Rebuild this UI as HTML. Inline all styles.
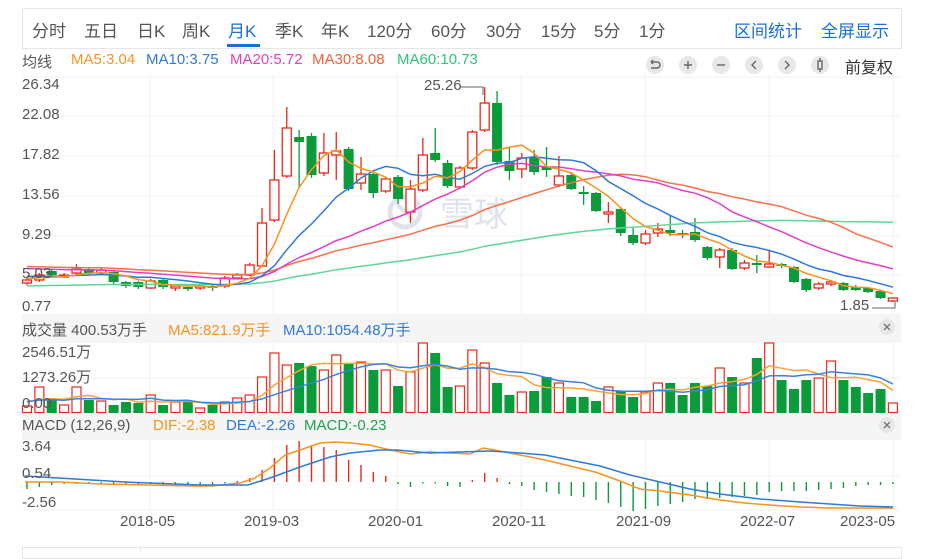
<!DOCTYPE html>
<html><head><meta charset="utf-8">
<style>
html,body{margin:0;padding:0;background:#fff;}
body{width:944px;height:551px;overflow:hidden;position:relative;font-family:"Liberation Sans","Noto Sans CJK SC",sans-serif;}
.t{position:absolute;white-space:nowrap;}
#bar{position:absolute;left:22px;top:8px;width:878px;height:39px;border:1px solid #e6e6e6;}
.tab{position:absolute;top:17px;font-size:17px;color:#555;}
.blue{color:#1a6fd1;}
.leg{position:absolute;top:51px;font-size:15px;}
.ax{position:absolute;font-size:15px;color:#555;}
</style></head><body>
<div id="bar"></div>
<div class="tab" style="left:32px">分时</div>
<div class="tab" style="left:84px">五日</div>
<div class="tab" style="left:137px">日K</div>
<div class="tab" style="left:182px">周K</div>
<div class="tab blue" style="left:228px">月K</div>
<div style="position:absolute;left:227px;top:44px;width:33px;height:3px;background:#1a6fd1"></div>
<div class="tab" style="left:275px">季K</div>
<div class="tab" style="left:321px">年K</div>
<div class="tab" style="left:367px">120分</div>
<div class="tab" style="left:431px">60分</div>
<div class="tab" style="left:486px">30分</div>
<div class="tab" style="left:541px">15分</div>
<div class="tab" style="left:594px">5分</div>
<div class="tab" style="left:639px">1分</div>
<div class="tab blue" style="left:734px">区间统计</div>
<div class="tab blue" style="left:821px">全屏显示</div>

<div class="leg" style="left:22px;color:#555">均线</div>
<div class="leg" style="left:71px;color:#f7931e">MA5:3.04</div>
<div class="leg" style="left:146px;color:#2f7ad6">MA10:3.75</div>
<div class="leg" style="left:230px;color:#e23fc6">MA20:5.72</div>
<div class="leg" style="left:312px;color:#f5603a">MA30:8.08</div>
<div class="leg" style="left:397px;color:#2ec47e">MA60:10.73</div>
<div class="t" style="left:845px;top:54px;font-size:16px;color:#333">前复权</div>

<svg width="944" height="551" style="position:absolute;left:0;top:0" id="s">
<g fill="#e8e8e8">
<circle cx="655" cy="65" r="9"/><circle cx="688" cy="65" r="9"/><circle cx="721" cy="65" r="9"/>
<circle cx="754" cy="65" r="9"/><circle cx="787" cy="65" r="9"/><circle cx="820" cy="65" r="9"/>
</g>
<g stroke="#666" stroke-width="1.4" fill="none">
<path d="M651 62h6a3 3 0 0 1 0 6h-6M651 62l2-2M651 62l2 2"/>
<path d="M684 65h8M688 61v8"/>
<path d="M717 65h8"/>
<path d="M756 61l-4 4 4 4"/>
<path d="M785 61l4 4-4 4"/>
<rect x="818" y="61" width="4" height="8"/><path d="M820 58v3M820 69v3"/>
</g>
<rect x="22" y="314" width="879" height="29" fill="#f5f5f5"/>
<rect x="22" y="413" width="879" height="27" fill="#f5f5f5"/>
<g fill="#e6e6e6"><circle cx="887" cy="327" r="8"/><circle cx="887" cy="425" r="8"/></g>
<g stroke="#777" stroke-width="1.3"><path d="M884 324l6 6M890 324l-6 6M884 422l6 6M890 422l-6 6"/></g>
<g stroke="#f0f0f0" stroke-width="1" id="grid">
<path d="M22 77H900M22 116H900M22 156H900M22 196H900M22 236H900M22 275H900"/>
<path d="M22 378H900M22 476H900M22 510H900"/>
<path d="M150 75V314M273 75V314M397 75V314M521 75V314M645 75V314M769 75V314M893 75V314"/>
<path d="M150 343V413M273 343V413M397 343V413M521 343V413M645 343V413M769 343V413M893 343V413"/>
<path d="M150 440V510M273 440V510M397 440V510M521 440V510M645 440V510M769 440V510M893 440V510"/>
</g>
<g>
<circle cx="405" cy="212" r="15" fill="none" stroke="#dfe4ec" stroke-width="5"/>
<path d="M397 204l16 16" stroke="#dfe4ec" stroke-width="4"/>
<text x="440" y="226" font-size="34" fill="#dfe4ec" font-family="Noto Sans CJK SC,sans-serif">雪球</text>
</g>
<g id="cv"></g>
<path d="M460 87H483V95" stroke="#666" fill="none"/>
<path d="M872 308H895V302" stroke="#666" fill="none"/>
</svg>
<div class="t" style="left:424px;top:77px;font-size:15px;color:#555">25.26</div>
<div class="t" style="left:840px;top:297px;font-size:15px;color:#555">1.85</div>

<div class="ax" style="left:22px;top:76px">26.34</div>
<div class="ax" style="left:22px;top:106px">22.08</div>
<div class="ax" style="left:22px;top:146px">17.82</div>
<div class="ax" style="left:22px;top:186px">13.56</div>
<div class="ax" style="left:22px;top:226px">9.29</div>
<div class="ax" style="left:22px;top:265px">5.03</div>
<div class="ax" style="left:22px;top:298px">0.77</div>

<div class="t" style="left:22px;top:319px;font-size:15px;color:#555">成交量 400.53万手</div>
<div class="t" style="left:168px;top:319px;font-size:15px;color:#f7931e">MA5:821.9万手</div>
<div class="t" style="left:283px;top:319px;font-size:15px;color:#2f7ad6">MA10:1054.48万手</div>
<div class="ax" style="left:22px;top:341px">2546.51万</div>
<div class="ax" style="left:22px;top:366px">1273.26万</div>
<div class="ax" style="left:22px;top:395px">0.00</div>

<div class="t" style="left:22px;top:417px;font-size:15px;color:#555">MACD (12,26,9)</div>
<div class="t" style="left:153px;top:417px;font-size:15px;color:#f7931e">DIF:-2.38</div>
<div class="t" style="left:226px;top:417px;font-size:15px;color:#2f7ad6">DEA:-2.26</div>
<div class="t" style="left:304px;top:417px;font-size:15px;color:#1ea34a">MACD:-0.23</div>
<div class="ax" style="left:22px;top:438px">3.64</div>
<div class="ax" style="left:22px;top:465px">0.54</div>
<div class="ax" style="left:22px;top:494px">-2.56</div>

<div class="ax" style="left:120px;top:513px">2018-05</div>
<div class="ax" style="left:244px;top:513px">2019-03</div>
<div class="ax" style="left:368px;top:513px">2020-01</div>
<div class="ax" style="left:492px;top:513px">2020-11</div>
<div class="ax" style="left:616px;top:513px">2021-09</div>
<div class="ax" style="left:740px;top:513px">2022-07</div>
<div class="ax" style="left:840px;top:513px">2023-05</div>
<div style="position:absolute;left:22px;top:547px;width:878px;height:10px;border:1px solid #e6e6e6"></div>
<div style="position:absolute;left:140px;top:547px;width:1px;height:5px;background:#e6e6e6"></div>

<script>
(function(){
var NS="http://www.w3.org/2000/svg",g=document.getElementById("cv");
function el(t,a){var e=document.createElementNS(NS,t);for(var k in a)e.setAttribute(k,a[k]);g.appendChild(e);return e;}
var R="#e8291c",G="#0b9b3a";
var C=[[283,280,278,285],[280,275,273,282],[271,275,270,277],[277,275,273,278],[273,269,264,275],[269,273,267,275],[273,270,267,275],[272,282,270,284],[282,286,281,288],[282,287,281,289],[288,281,279,289],[280,287,279,289],[287,286,284,291],[287,289,286,291],[288,286,284,290],[286,288,284,291],[286,278,276,288],[278,275,273,279],[275,265,263,276],[266,223,208,267],[220,180,150,222],[176,128,107,178],[137,142,130,187],[136,175,133,178],[173,153,133,176],[155,151,132,180],[149,189,147,191],[183,174,157,190],[174,193,172,198],[191,179,177,193],[177,199,175,204],[212,189,180,223],[190,155,138,192],[153,160,128,162],[163,186,160,188],[187,168,166,189],[168,132,130,170],[130,103,87,132],[103,162,91,165],[161,171,148,180],[169,158,153,178],[157,172,150,175],[167,170,147,177],[185,176,156,187],[175,189,172,190],[192,194,186,205],[193,211,192,212],[213,212,202,223],[209,233,207,236],[235,243,228,245],[243,234,230,245],[233,229,223,237],[230,233,216,236],[233,234,230,238],[232,240,218,242],[247,258,246,260],[257,250,248,268],[250,269,248,270],[268,263,260,270],[263,265,255,273],[267,264,250,268],[264,266,263,268],[267,282,266,283],[279,290,278,292],[288,284,282,290],[284,282,280,286],[283,290,282,291],[287,290,285,291],[288,292,287,293],[291,298,290,299],[301,298,298,302]];
function X(i){return 27+12.37*i;}
var V=[406,387,398,405,387,400,401,405,402,403,395,405,402,402,408,405,402,398,395,377,353,365,363,366,370,355,363,362,370,370,386,372,343,353,387,386,350,363,383,395,392,391,377,383,397,397,401,387,391,397,392,383,383,395,383,386,368,377,383,358,343,380,389,380,378,361,380,387,393,389,403];
var M=[489,487,485,484,484,484,483,484,484,485,484,485,485,485,485,485,482,481,478,470,458,445,441,445,447,450,460,465,472,476,484,487,483,482,486,487,480,473,478,484,486,490,492,494,496,497,500,503,507,511,509,506,504,502,499,499,498,497,496,495,492,491,491,491,490,489,488,486,485,485,484];
function ma(arr,n,pad){var o=[];for(var i=0;i<arr.length;i++){var s=0;for(var j=i-n+1;j<=i;j++)s+=(j<0?pad:arr[j]);o.push(s/n);}return o;}
function line(pts,c){el("polyline",{points:pts.map(function(v,i){return X(i).toFixed(1)+","+v.toFixed(1)}).join(" "),fill:"none",stroke:c,"stroke-width":1.5});}
for(var i=0;i<V.length;i++){var up=C[i][1]<C[i][0];var x=X(i);
 if(up)el("rect",{x:x-4.5,y:V[i],width:9,height:412.5-V[i],fill:"#fff",stroke:R,"stroke-width":1.2});
 else el("rect",{x:x-5,y:V[i],width:10,height:413-V[i],fill:G});}
var vol=V.map(function(v){return 413-v;});
line(ma(vol,5,12).map(function(v){return 413-v}),"#f7a33a");
line(ma(vol,10,12).map(function(v){return 413-v}),"#3a82dc");
for(var i=0;i<M.length;i++){var x=X(i);var c=M[i]<482?R:G;var y1=Math.min(M[i],482),y2=Math.max(M[i],482);if(y2-y1<1.5)y2=y1+1.5;el("line",{x1:x,x2:x,y1:y1,y2:y2,stroke:c,"stroke-width":1.4});}
function pl(p,c){el("polyline",{points:p,fill:"none",stroke:c,"stroke-width":1.5});}
pl("25,482 60,482 100,484 150,485 190,486 212,486 240,483 255,478 270,468 285,455 300,450 320,443 335,442 350,443 370,445 390,450 410,454 430,452 450,453 470,454 483,448 495,450 520,455 545,460 570,466 595,472 620,481 640,489 660,491 690,495 720,500 745,503 770,505 800,507 830,508 860,508 893,508","#f7931e");
pl("25,476 75,479 125,482 200,485 248,485 270,478 300,467 330,457 350,453 380,450 397,450 430,453 460,452 490,451 520,453 545,455 570,460 600,466 630,475 660,482 690,489 720,494 760,499 800,502 830,504 860,506 893,507","#2f7ad6");
for(var i=0;i<C.length;i++){var c=C[i],x=X(i),up=c[1]<c[0];var col=up?R:G;var top=Math.min(c[0],c[1]),bot=Math.max(c[0],c[1]);if(bot-top<2)bot=top+2;
 el("line",{x1:x,x2:x,y1:c[2],y2:top,stroke:col,"stroke-width":1.3});
 el("line",{x1:x,x2:x,y1:bot,y2:c[3],stroke:col,"stroke-width":1.3});
 if(up)el("rect",{x:x-4.5,y:top,width:9,height:bot-top,fill:"#fff",stroke:col,"stroke-width":1.3});
 else el("rect",{x:x-5,y:top,width:10,height:bot-top,fill:col});}
var cl=C.map(function(c){return c[1];});
line(ma(cl,60,286),"#5fd69a");
line(ma(cl,30,266),"#f7724a");
line(ma(cl,20,268),"#e23fc6");
line(ma(cl,10,276),"#2f7ad6");
line(ma(cl,5,278),"#f7931e");
})();
</script>
</body></html>
